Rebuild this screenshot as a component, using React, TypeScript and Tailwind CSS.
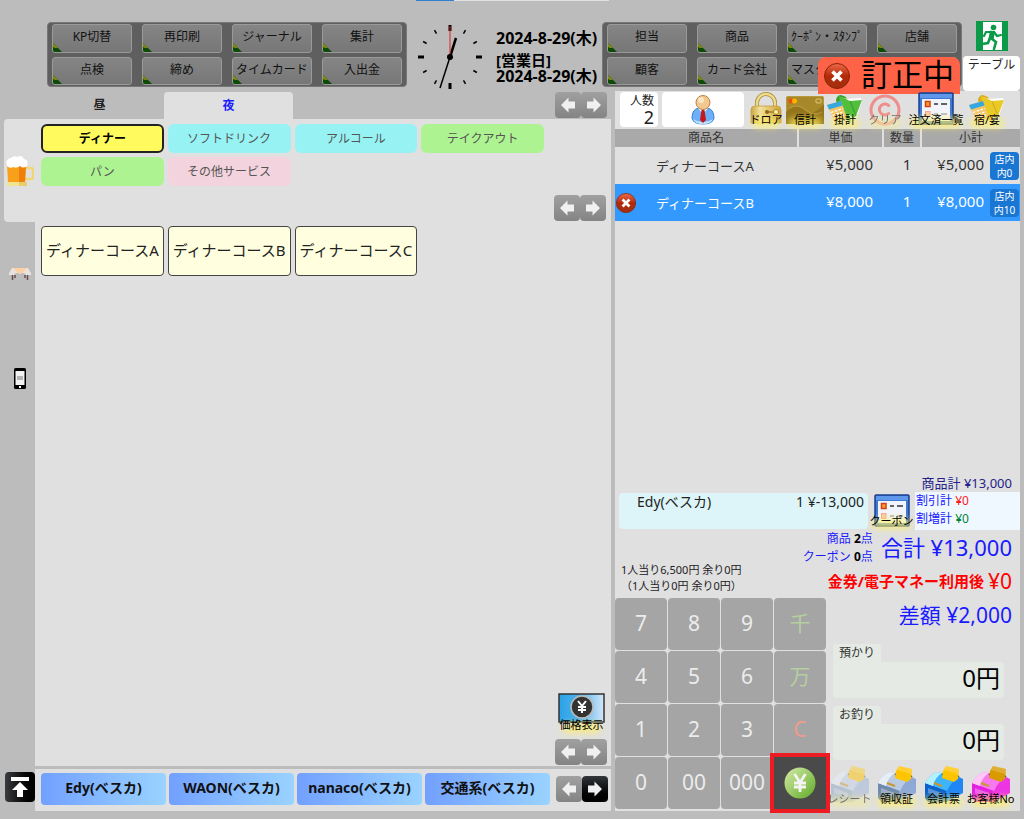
import React from "react";
import clsx from "clsx";

const leftMenu = ["KP切替", "再印刷", "ジャーナル", "集計", "点検", "締め", "タイムカード", "入出金"];
const rightMenu = ["担当", "商品", "ｸｰﾎﾟﾝ・ｽﾀﾝﾌﾟ", "店舗", "顧客", "カード会社", "マスター管理", ""];

const categories = [
    { name: "ディナー", style: "bg-[#fffb5e] border-2 border-[#222] font-bold text-black" },
    { name: "ソフトドリンク", style: "bg-[#97f3f3] text-[#555]" },
    { name: "アルコール", style: "bg-[#97f3f3] text-[#555]" },
    { name: "テイクアウト", style: "bg-[#adf391] text-[#555]" },
    { name: "パン", style: "bg-[#adf391] text-[#555]" },
    { name: "その他サービス", style: "bg-[#f3d3dd] text-[#555]" },
];

const items = ["ディナーコースA", "ディナーコースB", "ディナーコースC"];
const payments = ["Edy(ベスカ)", "WAON(ベスカ)", "nanaco(ベスカ)", "交通系(ベスカ)"];

const orders = [
    { name: "ディナーコースA", price: "¥5,000", qty: 1, total: "¥5,000", tax: "内0", selected: false },
    { name: "ディナーコースB", price: "¥8,000", qty: 1, total: "¥8,000", tax: "内10", selected: true },
];

const keys = ["7", "8", "9", "千", "4", "5", "6", "万", "1", "2", "3", "C", "0", "00", "000"];

const keyColors: Record<string, string> = {
    千: "text-[#b5cf9f]",
    万: "text-[#b5cf9f]",
    C: "text-[#ef9a8c]",
};

const printers = [
    { label: "レシート", light: "#e6eef6", top: "#c3d2e6", side: "#9fb4da", front: "#8ea6c4", paper: "#ffc400", disabled: true },
    { label: "領収証", light: "#e6eef6", top: "#b9cbe2", side: "#8fa9d6", front: "#6f8aac", paper: "#ffc400", disabled: false },
    { label: "会計票", light: "#b5f0ff", top: "#3fb4f8", side: "#1f86f5", front: "#0c62cc", paper: "#ffc400", disabled: false },
    { label: "お客様No", light: "#ffc8f6", top: "#f878ee", side: "#ee35e4", front: "#e41fe0", paper: "#d99a00", disabled: false },
];

function MenuPanel({ names }: { names: string[] }) {
    return (
        <nav className="grid h-[65px] w-[360px] shrink-0 grid-cols-4 gap-x-2.5 gap-y-1 rounded border border-[#777] bg-[#5f5f5f] px-1 py-px">
            {names.map((name, i) => (
                <button
                    key={i}
                    className="relative overflow-hidden whitespace-nowrap rounded-[3px] border border-[#9a9a9a] bg-linear-to-b from-[#858585] to-[#777] pb-0.5 text-xs leading-4 text-[#111]"
                >
                    {name}
                    <svg className="absolute bottom-0 left-0 h-[9px] w-[9px]" viewBox="0 0 9 9">
                        <path d="M0 0L9 9H0Z" fill="#0d4a05" />
                        <path d="M0 0L5 5L2 5L0 4Z" fill="#7f8a10" />
                    </svg>
                </button>
            ))}
        </nav>
    );
}

function Clock() {
    const ticks = Array.from({ length: 12 }, (_, i) => i);
    return (
        <svg className="mt-0.5 ml-2.5 h-[66px] w-[66px] shrink-0" viewBox="0 0 66 66">
            {ticks.map((i) => (
                <line
                    key={i}
                    x1="33"
                    x2="33"
                    y1={i % 3 === 0 ? 1 : 2}
                    y2={i % 3 === 0 ? 7 : 6}
                    stroke="#000"
                    strokeWidth={i % 3 === 0 ? 3 : 1.5}
                    transform={`rotate(${i * 30} 33 33)`}
                />
            ))}
            <line x1="33" y1="33" x2="23" y2="64" stroke="#000" strokeWidth="1.5" />
            <line x1="33" y1="33" x2="39" y2="14" stroke="#000" strokeWidth="2.5" />
            <line x1="33" y1="35" x2="33" y2="2" stroke="#e02020" strokeWidth="1" />
            <circle cx="33" cy="33" r="3" fill="#000" />
        </svg>
    );
}

function Arrow({ flip }: { flip?: boolean }) {
    return (
        <svg className={clsx("h-4 w-4", flip && "-scale-x-100")} viewBox="0 0 16 16">
            <path d="M1 8L8.500 0.500V4.500H15V11.500H8.500V15.500Z" fill="#f0f0f0" />
        </svg>
    );
}

function Pager({ nextActive }: { nextActive?: boolean }) {
    return (
        <div className="flex h-[26px] w-[52px] shrink-0">
            <button aria-label="前へ" className="flex w-[26px] items-center justify-center rounded bg-linear-to-b from-[#a0a0a0] to-[#848484]">
                <Arrow />
            </button>
            <button
                aria-label="次へ"
                className={clsx(
                    "flex w-[26px] items-center justify-center rounded bg-linear-to-b",
                    nextActive ? "from-[#33363a] to-black" : "from-[#a0a0a0] to-[#848484]",
                )}
            >
                <Arrow flip />
            </button>
        </div>
    );
}

function CloseMark({ className }: { className: string }) {
    return (
        <svg className={className} viewBox="0 0 26 26">
            <defs>
                <linearGradient id="close" x1="0" y1="0" x2="0" y2="1">
                    <stop offset="0" stopColor="#ee6a4a" />
                    <stop offset="0.5" stopColor="#b52a08" />
                    <stop offset="1" stopColor="#a03010" />
                </linearGradient>
            </defs>
            <circle cx="13" cy="13" r="12.5" fill="url(#close)" stroke="#8a2408" />
            <path d="M8.500 8.500L17.500 17.500M17.500 8.500L8.500 17.500" stroke="#fff" strokeWidth="3.600" />
        </svg>
    );
}

function ToolButton({ label, width, faded, children }: { label: string; width: string; faded?: boolean; children: React.ReactNode }) {
    return (
        <button className={clsx("relative flex h-full justify-center", width, faded && "opacity-50")}>
            {children}
            <span className="absolute inset-x-1 bottom-0 h-2.5 rounded-full bg-[#fff060]/70 blur-[3px]" />
            <span className="absolute inset-x-0 bottom-0 flex justify-center whitespace-nowrap text-[11px] leading-4 text-black">
                {label}
            </span>
        </button>
    );
}

function LockIcon() {
    return (
        <svg className="h-8 w-8" viewBox="0 0 32 32">
            <defs>
                <linearGradient id="lock" x1="0" y1="0" x2="1" y2="0">
                    <stop offset="0" stopColor="#c9a640" />
                    <stop offset="0.3" stopColor="#f2e09a" />
                    <stop offset="1" stopColor="#cfa338" />
                </linearGradient>
            </defs>
            <path d="M7 17V11a9 9 0 0 1 18 0V17" fill="none" stroke="#a88a30" strokeWidth="4" />
            <path d="M7 17V11a9 9 0 0 1 18 0V17" fill="none" stroke="#efdc90" strokeWidth="2.500" />
            <path d="M1 18Q1 14 5 14H27Q31 14 31 18V31H1Z" fill="url(#lock)" stroke="#c7a040" strokeWidth="0.800" />
            <path d="M17 20H25" stroke="#8a6a14" strokeWidth="1.200" />
            <circle cx="17" cy="20" r="2" fill="#8a6a14" />
            <circle cx="26" cy="20" r="2.500" fill="#fff0a8" stroke="#a8842a" />
            <path d="M25 22L29 25" stroke="#a8842a" strokeWidth="1.500" />
        </svg>
    );
}

function CardIcon() {
    return (
        <svg className="mt-1 h-7 w-[38px]" viewBox="0 0 38 28">
            <rect x="0.500" y="0.500" width="37" height="27" rx="1" fill="#a8892a" stroke="#b79a3a" />
            <path d="M0 16Q10 6 18 14T38 8V28H0Z" fill="#93751c" />
            <path d="M4 12Q12 7 20 14T36 16" fill="none" stroke="#c0a348" strokeWidth="0.800" />
            <circle cx="5" cy="5" r="2.500" fill="#f04a10" />
            <circle cx="8.500" cy="5" r="2.500" fill="#ffb400" />
            <rect x="30" y="3" width="5" height="4" rx="1" fill="none" stroke="#e0c878" />
        </svg>
    );
}

function FoldersIcon({ main, light, dark }: { main: string; light: string; dark: string }) {
    return (
        <svg className="mt-0.5 h-[30px] w-9" viewBox="0 0 36 30">
            <path d="M9 6Q10 1 14 1L19 3L24 28L13 22Z" fill={dark} />
            <path d="M13 3L22 5L30 24L14 18Z" fill={light} />
            <path d="M20 5L34 4L35 7L29 25L22 22Z" fill="#fff" />
            <path d="M12 2L23 7L35 6L29 22Q26 26 24 22L14 17Z" fill={main} />
            <path d="M23 7L29 22" stroke={dark} strokeWidth="1.200" />
            <path d="M0 11L14 7L20 24L8 28Z" fill="#f3c768" />
            <path d="M0 11L14 7L15.500 11.500L2 15.500Z" fill="#35a8e0" />
            <path d="M4 18.500L16 14.500M5.500 21.500L17 17.500M7 24.500L18 20.500" stroke="#fff" strokeWidth="1.300" strokeDasharray="2.500 1.500" />
        </svg>
    );
}

function WindowIcon() {
    return (
        <svg className="h-[33px] w-9" viewBox="0 0 36 33">
            <rect x="1" y="1" width="34" height="31" rx="1" fill="#3f79d6" stroke="#1b3f8f" strokeWidth="1.500" />
            <path d="M2 2H34V6H2Z" fill="#5f97ea" />
            <path d="M4 7H32V29H4Z" fill="#f1f4fb" />
            <rect x="7.500" y="9.500" width="4.500" height="5" fill="#ff9b20" stroke="#d0401a" strokeWidth="1.500" />
            <path d="M16 12H20M23 12H29" stroke="#333" strokeWidth="1.500" />
            <rect x="7.500" y="19.500" width="4.500" height="5" fill="#ffc8a8" stroke="#f0a890" />
            <path d="M16 22H20M23 22H29" stroke="#aaa" strokeWidth="1.500" />
        </svg>
    );
}

function PersonIcon() {
    return (
        <svg className="h-8 w-6" viewBox="0 0 24 32">
            <path d="M1 24Q1 15 8 14H16Q23 15 23 24Q22 30 12 30T1 24Z" fill="#6db0f7" stroke="#3d7fd0" />
            <path d="M2 25Q4 30 12 30T22 25Q18 28 12 28T2 25Z" fill="#c8e6ff" />
            <path d="M7 14L12 20L17 14Z" fill="#fff" />
            <path d="M10.500 16H13.500L15 26L12 29L9 26Z" fill="#c4161c" />
            <circle cx="12" cy="8.500" r="7" fill="#f3c890" stroke="#bb8040" />
            <circle cx="10" cy="6" r="3" fill="#fbe6c6" />
        </svg>
    );
}

function ExitIcon() {
    return (
        <svg className="h-[30px] w-8" viewBox="0 0 32 30">
            <rect width="32" height="30" fill="#0a9a48" />
            <path d="M7 1H26V29H7Z" fill="#fff" />
            <circle cx="17.500" cy="6.500" r="2.800" fill="#0a9a48" />
            <path d="M16 11L10 11L8 15M18 11L21 15L25 14" fill="none" stroke="#0a9a48" strokeWidth="2.200" strokeLinecap="round" />
            <path d="M14 9.500L19 10.500L17.500 19L12.500 18Z" fill="#0a9a48" />
            <path d="M16 18L20 21L18 28M14 17L12 22L6 23" fill="none" stroke="#0a9a48" strokeWidth="2.600" strokeLinecap="round" />
        </svg>
    );
}

function BeerIcon() {
    return (
        <svg className="h-8 w-7" viewBox="0 0 28 32">
            <path d="M19 13H25Q27 13 27 15V22Q27 24 25 24H18" fill="none" stroke="#efd576" strokeWidth="2.500" />
            <path d="M1 9H20L19 27H2Z" fill="#f9a01b" />
            <path d="M13 9H20L19 27H13Z" fill="#f07f08" />
            <path d="M1 27H21V31H1Z" fill="#f1e48f" />
            <path d="M13 27H21V31H13Z" fill="#e9cb70" />
            <path d="M1 11Q-1 4 5 3Q7 0 11 2Q16 -1 18 4Q23 5 21 11Q17 14 14 11Q10 14 8 12Q3 14 1 11Z" fill="#fff" />
        </svg>
    );
}

function TableIcon() {
    return (
        <svg className="h-3 w-[22px]" viewBox="0 0 22 12">
            <path d="M3 0H19L22 5V7H17L15 5H7L5 7H0V5Z" fill="#e9e2de" />
            <path d="M4 0H18L12 6H10Z" fill="#fdd0a4" />
            <path d="M3.500 7V12M6 7V10M16 7V10M18.500 7V12" stroke="#6b4a4a" strokeWidth="1.500" />
        </svg>
    );
}

function PhoneIcon() {
    return (
        <svg className="h-[21px] w-3" viewBox="0 0 12 21">
            <rect width="12" height="21" rx="1.500" fill="#000" />
            <rect x="1.500" y="3" width="9" height="14" fill="#f2f2f2" />
            <path d="M3 9H9M3 11H9" stroke="#777" />
            <rect x="5" y="18" width="2" height="2" fill="#fff" />
        </svg>
    );
}

function YenCoin() {
    return (
        <svg className="h-8 w-8" viewBox="0 0 32 32">
            <defs>
                <linearGradient id="coin" x1="0" y1="0" x2="1" y2="1">
                    <stop offset="0" stopColor="#d6ecaa" />
                    <stop offset="1" stopColor="#5faa25" />
                </linearGradient>
            </defs>
            <circle cx="16" cy="16" r="15.500" fill="url(#coin)" />
            <path d="M10.500 7L16 15.500L21.500 7M16 15V25M10 16H22M10 20H22" fill="none" stroke="#f4f4f4" strokeWidth="2.800" />
        </svg>
    );
}

function PriceIcon() {
    return (
        <svg className="h-8 w-[47px]" viewBox="0 0 47 32">
            <defs>
                <linearGradient id="price" x1="0" y1="0" x2="1" y2="0">
                    <stop offset="0" stopColor="#2aa3e8" />
                    <stop offset="0.45" stopColor="#4fb0ec" />
                    <stop offset="1" stopColor="#d4e6f8" />
                </linearGradient>
            </defs>
            <rect x="1" y="1" width="45" height="28" fill="url(#price)" stroke="#333" strokeWidth="1.500" />
            <circle cx="24" cy="14" r="11" fill="#333" stroke="#bbb" strokeWidth="1.500" />
            <path d="M20 8L24 13L28 8M24 13V20M20 14H28M20 17H28" fill="none" stroke="#fff" strokeWidth="2" />
        </svg>
    );
}

function PrinterIcon({ light, top, side, front, paper }: { light: string; top: string; side: string; front: string; paper: string }) {
    return (
        <svg className="h-9 w-[38px]" viewBox="0 0 38 36">
            <path d="M0 17L22 24V36H3L0 32Z" fill={front} />
            <path d="M21 24Q27 13 34 11L38 13V27L22 36Z" fill={side} />
            <path d="M0 17Q4 9 12 6L32 10L35 11Q27 14 22 25Z" fill={top} />
            <path d="M0 17Q4 9 12 6L17 7Q10 11 8 20Z" fill={light} />
            <path d="M17 8L27 14L34 10" fill="none" stroke="#3a4458" strokeWidth="1.500" />
            <path d="M18 5L21 0L34 3L33 13L29 16L17 12Z" fill={paper} />
            <path d="M21 0L34 3L33 8L19 4Z" fill="#fff" opacity="0.2" />
            <path d="M9 17L17 20" stroke="#c79a30" strokeWidth="2" />
            <path d="M3 22L17 27V31L3 27Z" fill="#fff" opacity="0.3" />
        </svg>
    );
}

function SalesPanel() {
    return (
        <main className="flex min-w-0 flex-1 flex-col">
            <div className="flex h-7 items-end pl-[35px] text-xs font-bold">
                <button className="h-full w-[129px] text-[#222]">昼</button>
                <button className="h-[27px] w-[129px] rounded-t bg-[#e0e0e0] text-[#1a1aff]">夜</button>
                <div className="mr-1 ml-auto pb-px">
                    <Pager />
                </div>
            </div>

            <div className="flex flex-1">
                <aside className="w-[35px] shrink-0 pl-1">
                    <button aria-label="ドリンク" className="flex h-[103px] w-full items-center justify-center rounded-l bg-[#e0e0e0]">
                        <BeerIcon />
                    </button>
                    <button aria-label="テーブル席" className="flex h-[104px] w-full items-center justify-center">
                        <TableIcon />
                    </button>
                    <button aria-label="モバイル" className="flex h-[104px] w-full items-center justify-center">
                        <PhoneIcon />
                    </button>
                </aside>

                <section className="flex flex-1 flex-col bg-[#e0e0e0] pt-[5px] pl-1.5">
                    <div className="mr-[67px] grid grid-cols-4 gap-1">
                        {categories.map((c) => (
                            <button key={c.name} className={clsx("h-[29px] rounded-md text-xs", c.style)}>
                                {c.name}
                            </button>
                        ))}
                    </div>
                    <div className="mt-[9px] mr-[5px] flex justify-end">
                        <Pager />
                    </div>
                    <div className="mt-[5px] mr-[67px] grid grid-cols-4 gap-1">
                        {items.map((name) => (
                            <button key={name} className="h-[50px] whitespace-nowrap rounded border border-[#444] bg-[#ffffe0] pb-0.5 text-[15px] text-[#222]">
                                {name}
                            </button>
                        ))}
                    </div>
                    <div className="mt-auto mr-1 flex flex-col items-end gap-1.5 pb-px">
                        <div className="h-10 pr-0.5">
                            <ToolButton label="価格表示" width="w-[47px]">
                                <PriceIcon />
                            </ToolButton>
                        </div>
                        <Pager />
                    </div>
                </section>
            </div>

            <div className="mt-[3px] flex">
                <div className="w-[35px] shrink-0 pt-[3px] pl-[5px]">
                    <button aria-label="先頭へ" className="flex h-[30px] w-[30px] items-center justify-center rounded bg-linear-to-r from-[#3a3d40] to-black">
                        <svg className="h-5 w-5" viewBox="0 0 20 20">
                            <path d="M1 0H19V4H1ZM10 5L18 13H13V20H7V13H2Z" fill="#fff" />
                        </svg>
                    </button>
                </div>
                <div className="flex h-[42px] flex-1 items-center gap-1.5 bg-[#e0e0e0] pr-[3px] pb-0.5 pl-1.5">
                    <div className="grid flex-1 grid-cols-4 gap-[3px]">
                        {payments.map((p) => (
                            <button key={p} className="h-8 whitespace-nowrap rounded bg-linear-to-r from-[#72a0ff] to-[#9ad3ff] pb-0.5 text-sm font-bold text-[#111]">
                                {p}
                            </button>
                        ))}
                    </div>
                    <Pager nextActive />
                </div>
            </div>
        </main>
    );
}

function OrderTable() {
    return (
        <table className="w-full table-fixed border-collapse text-[#333]">
            <colgroup>
                <col />
                <col className="w-[85px]" />
                <col className="w-[38px]" />
                <col className="w-[69px]" />
                <col className="w-[30px]" />
            </colgroup>
            <thead>
                <tr className="h-[18px] bg-[#a9a9a9] text-xs leading-4">
                    <th className="border-r-2 border-[#e0e0e0] p-0 font-normal">商品名</th>
                    <th className="border-r-2 border-[#e0e0e0] p-0 font-normal">単価</th>
                    <th className="border-r-2 border-[#e0e0e0] p-0 font-normal">数量</th>
                    <th className="p-0 font-normal" colSpan={2}>小計</th>
                </tr>
            </thead>
            <tbody>
                {orders.map((o) => (
                    <tr key={o.name} className={clsx("h-[37px] text-[15px] leading-5", o.selected && "bg-[#3399ff] text-white")}>
                        <td className="p-0 text-[13px]">
                            <div className="flex items-center">
                                <div className="flex w-[41px] pl-px">
                                    {o.selected && (
                                        <button aria-label="取消">
                                            <CloseMark className="h-5 w-5" />
                                        </button>
                                    )}
                                </div>
                                {o.name}
                            </div>
                        </td>
                        <td className="p-0 pr-2.5 pb-1 text-right">{o.price}</td>
                        <td className="p-0 pb-1 pl-2.5 text-center">{o.qty}</td>
                        <td className="p-0 pr-1.5 pb-1 text-right">{o.total}</td>
                        <td className="p-0 pr-px">
                            <div className="rounded bg-[#1976d2] text-center text-[10px] leading-[14px] text-white">
                                店内
                                <br />
                                {o.tax}
                            </div>
                        </td>
                    </tr>
                ))}
            </tbody>
        </table>
    );
}

function AmountBox({ label, value }: { label: string; value: string }) {
    return (
        <div className="mr-4 ml-[7px]">
            <div className="h-[18px] w-12 rounded-t bg-[#e5ebe4] pl-1.5 text-xs leading-[18px] text-[#333]">{label}</div>
            <div className="h-9 rounded-r rounded-bl bg-[#e5ebe4] pr-1 text-right text-2xl leading-8 text-black">{value}</div>
        </div>
    );
}

function CheckPanel() {
    return (
        <section className="mr-1 ml-1 flex w-[405px] shrink-0 flex-col bg-[#e0e0e0] pb-0.5">
            {/* Customer and tool buttons */}
            <div className="flex h-[38px] pt-px pl-[5px]">
                <button className="mr-1 flex h-[35px] w-[38px] flex-col items-end rounded bg-white pt-0.5 pr-1 text-[#222]">
                    <span className="text-xs leading-[14px]">人数</span>
                    <span className="text-lg leading-[18px]">2</span>
                </button>
                <button aria-label="顧客" className="mr-1 flex h-[35px] w-[82px] items-center justify-center rounded bg-white">
                    <PersonIcon />
                </button>
                <div className="flex h-9">
                    <ToolButton label="ドロア" width="w-9"><LockIcon /></ToolButton>
                    <ToolButton label="信計" width="w-[42px]"><CardIcon /></ToolButton>
                    <ToolButton label="掛計" width="w-[38px]"><FoldersIcon main="#52bf3c" light="#a4e07c" dark="#37a030" /></ToolButton>
                    <ToolButton label="クリア" width="w-[42px]" faded>
                        <svg className="mt-0.5 h-8 w-8" viewBox="0 0 32 32">
                            <circle cx="16" cy="16" r="14" fill="none" stroke="#ff3a3a" strokeWidth="3" />
                            <path d="M20.500 12.500A5.500 5.500 0 1 0 20.500 18.500" fill="none" stroke="#ff3a3a" strokeWidth="3" />
                        </svg>
                    </ToolButton>
                    <ToolButton label="注文済一覧" width="w-[60px]"><WindowIcon /></ToolButton>
                    <ToolButton label="宿/宴" width="w-[42px]"><FoldersIcon main="#e8c928" light="#f7e680" dark="#d9ac1c" /></ToolButton>
                </div>
            </div>

            <div className="flex-1">
                <OrderTable />
            </div>

            {/* Totals */}
            <div className="h-[18px] pr-2 text-right text-[13px] leading-[18px] text-[#22228a]">商品計 ¥13,000</div>
            <div className="flex h-[38px] pl-1">
                <div className="mt-px mb-px flex flex-1 justify-between rounded bg-[#ddf5f8] pr-1 pl-[18px] text-sm leading-[18px] text-[#222]">
                    <span>Edy(ベスカ)</span>
                    <span>1 ¥-13,000</span>
                </div>
                <div className="h-[37px] pt-0.5">
                    <ToolButton label="クーポン" width="w-[47px]"><WindowIcon /></ToolButton>
                </div>
                <div className="w-[105px] bg-[#f0f8ff] pl-px text-xs leading-[18px] text-[#1a1aff]">
                    <div>割引計 <span className="text-[#ff1a1a]">¥0</span></div>
                    <div>割増計 <span className="text-green-700">¥0</span></div>
                </div>
            </div>
            <div className="flex h-[68px]">
                <div className="flex flex-1 flex-col justify-end pb-1 pl-1.5 text-[11px] leading-4 text-[#222]">
                    <div>1人当り6,500円 余り0円</div>
                    <div>（1人当り0円 余り0円）</div>
                </div>
                <div className="pr-2 text-[#1a1aff]">
                    <div className="flex h-[35px] items-center justify-end gap-2">
                        <div className="text-right text-xs leading-[18px]">
                            <div>商品 <b className="text-black">2</b>点</div>
                            <div>クーポン <b className="text-black">0</b>点</div>
                        </div>
                        <div className="text-[22px] leading-[35px]">合計 ¥13,000</div>
                    </div>
                    <div className="flex h-[33px] items-center justify-end gap-1 text-[15px] font-bold text-[#ff0000]">
                        金券/電子マネー利用後
                        <span className="text-[21px] font-normal">¥0</span>
                    </div>
                </div>
            </div>

            {/* Keypad and change */}
            <div className="flex">
                <div className="grid w-[211px] shrink-0 grid-cols-4 gap-px">
                    {keys.map((k) => (
                        <button key={k} className={clsx("h-[52px] rounded bg-[#a5a5a5] text-[21px]", keyColors[k] ?? "text-[#ececec]")}>
                            {k}
                        </button>
                    ))}
                    <button aria-label="会計" className="z-10 flex h-[52px] items-center justify-center bg-[#4a4a4a] outline-4 outline-[#ed1c24]">
                        <YenCoin />
                    </button>
                </div>
                <div className="flex min-w-0 flex-1 flex-col">
                    <div className="mb-3 h-[34px] pr-2 text-right text-[21px] leading-[34px] text-[#1a1aff]">差額 ¥2,000</div>
                    <AmountBox label="預かり" value="0円" />
                    <div className="mt-2">
                        <AmountBox label="お釣り" value="0円" />
                    </div>
                    <div className="mt-1.5 mr-1.5 grid h-[41px] grid-cols-4">
                        {printers.map((p) => (
                            <ToolButton key={p.label} label={p.label} width="w-full" faded={p.disabled}>
                                <PrinterIcon light={p.light} top={p.top} side={p.side} front={p.front} paper={p.paper} />
                            </ToolButton>
                        ))}
                    </div>
                </div>
            </div>
        </section>
    );
}

export default function App() {
    return (
        <div className="flex min-h-screen flex-col bg-[#bcbcbc] pb-2 font-['Noto_Sans','Noto_Sans_CJK_JP',sans-serif]">
            <div className="flex h-px">
                <div className="w-[416px]" />
                <div className="w-[38px] bg-[#2f80d0]" />
                <div className="w-[155px] bg-[#e0e0e0]" />
            </div>
            <header className="flex pt-[21px] pr-1 pb-px pl-[47px]">
                <MenuPanel names={leftMenu} />
                <Clock />
                <div className="ml-[13px] pt-2 text-base leading-4 font-bold whitespace-nowrap text-black">
                    <div className="mb-1.5">2024-8-29(木)</div>
                    <div className="text-[15px]">[営業日]</div>
                    <div>2024-8-29(木)</div>
                </div>
                <div className="relative ml-auto">
                    <MenuPanel names={rightMenu} />
                    <div className="absolute right-0.5 -bottom-1 flex h-[37px] w-[142px] items-center justify-between rounded-t-lg bg-[#ff6347] px-1.5 text-black">
                        <CloseMark className="h-[26px] w-[26px]" />
                        <span className="pb-1 text-[31px] leading-8">訂正中</span>
                    </div>
                </div>
                <div className="-mt-px -mb-px ml-px flex w-[57px] shrink-0 flex-col items-center justify-between">
                    <button aria-label="終了">
                        <ExitIcon />
                    </button>
                    <button className="flex h-[35px] w-full justify-center rounded bg-white pt-px text-xs leading-4 text-[#222]">テーブル</button>
                </div>
            </header>

            <div className="flex flex-1">
                <SalesPanel />
                <CheckPanel />
            </div>
        </div>
    );
}
